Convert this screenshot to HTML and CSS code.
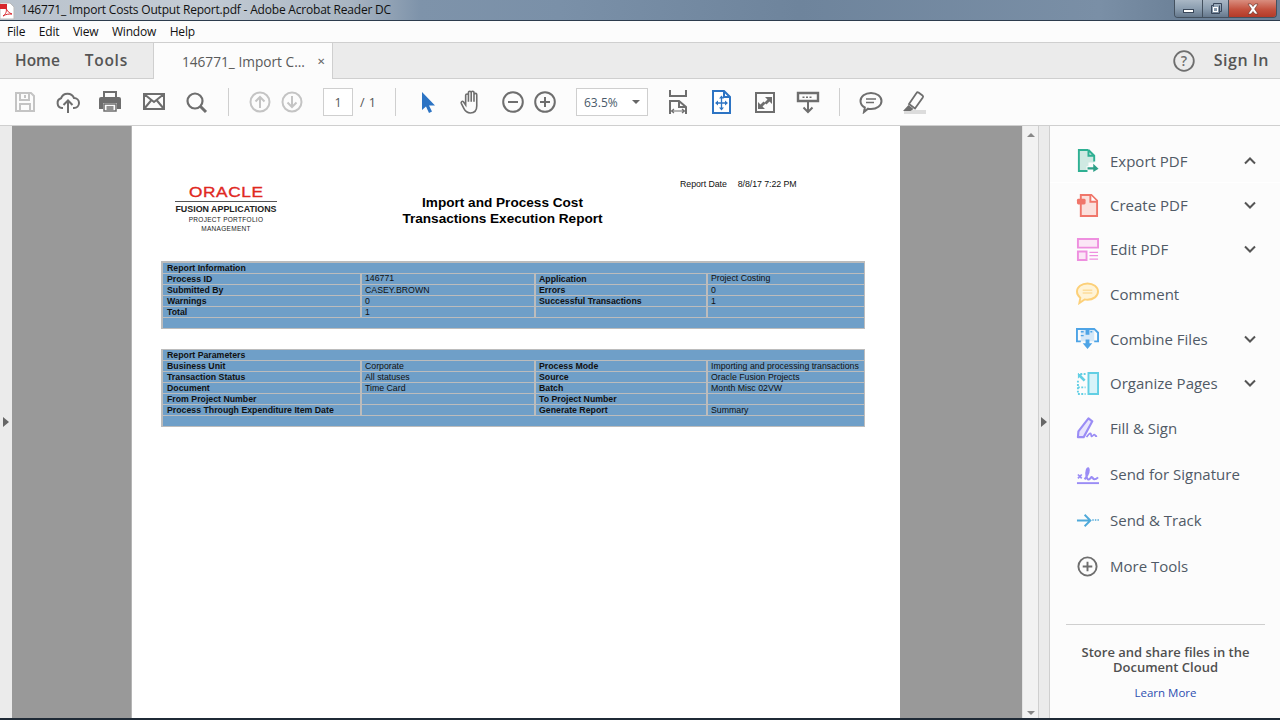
FILE: index.html
```html
<!DOCTYPE html>
<html lang="en">
<head>
<meta charset="utf-8">
<title>146771_ Import Costs Output Report.pdf - Adobe Acrobat Reader DC</title>
<link rel="stylesheet" href="styles.css">
</head>
<body>
<div class="app">
  <header class="titlebar">
    <svg class="appicon" width="16" height="20" viewBox="0 0 16 20"><path d="M0 2h10l4 4v12H0z" fill="#fff" stroke="#bbb"/><path d="M0 3h7v5H0z" fill="#d8262c"/><path d="M3 15c3-2 4-5 3-8 1 3 3 5 6 6-3 0-6 0-9 2z" fill="none" stroke="#d8262c"/></svg>
    <span class="titletext">146771_ Import Costs Output Report.pdf - Adobe Acrobat Reader DC</span>
    <div class="winbtns">
      <div class="winbtn min"><span class="minbar"></span></div>
      <div class="winbtn restore"><svg width="12" height="12" viewBox="0 0 12 12"><path d="M3.5 .5h8v8h-2v2h-8v-8h2z M3.5 2.5v1 M9.5 2.5v6" fill="none" stroke="#39475a"/><rect x="3.5" y="4.5" width="4" height="4" fill="none" stroke="#fff"/></svg></div>
      <div class="winbtn close"><svg width="18" height="12" viewBox="0 0 18 12"><path d="M4 1h3l2 2.5L11 1h3l-3.4 5L14 11h-3L9 8.5 7 11H4l3.4-5z" fill="#fff" stroke="#5c2a22" stroke-width=".6"/></svg></div>
    </div>
  </header>
  <nav class="menubar">
    <span>File</span><span>Edit</span><span>View</span><span>Window</span><span>Help</span>
  </nav>
  <div class="tabbar">
    <span class="navtab home">Home</span>
    <span class="navtab toolstab">Tools</span>
    <div class="doctab"><span class="doctitle">146771_ Import C...</span><span class="tabx">&#10005;</span></div>
    <svg class="help" width="24" height="24" viewBox="0 0 24 24"><circle cx="12" cy="12" r="9.8" fill="none" stroke="#6e6e6e" stroke-width="1.8"/><text x="12" y="17" text-anchor="middle" class="helpq">?</text></svg>
    <span class="signin">Sign In</span>
  </div>
  <div class="toolbar">
    <div class="grp wide">
      <svg class="ic" viewBox="0 0 24 24"><path d="M3 3h15l3 3v15H3z M7 3v7h9V3 M12 5v3 M7 21v-7h10v7" fill="none" stroke="#c4c4c4" stroke-width="2"/></svg>
      <svg class="ic" viewBox="0 0 24 24"><path d="M7 18H6a5 5 0 0 1-1-9.700A7 7 0 0 1 18 8a5 5 0 0 1 0 10h-1" fill="none" stroke="#6e6e6e" stroke-width="2"/><path d="M12 23V11 M7.500 15l4.500-4.500 4.500 4.500" fill="none" stroke="#6e6e6e" stroke-width="2"/></svg>
      <svg class="ic" viewBox="1 0 24 24"><path d="M6 8V2h12v6" fill="none" stroke="#6e6e6e" stroke-width="2"/><path d="M3 7h18a2 2 0 0 1 2 2v10h-4v-6H5v6H1V9a2 2 0 0 1 2-2z" fill="#6e6e6e"/><path d="M6 14h12v7H6z M8.500 17h7 M8.500 19h7" fill="none" stroke="#6e6e6e" stroke-width="1.500"/></svg>
      <svg class="ic" viewBox="0 0 24 24"><path d="M2 4h20v15H2z M2 4l10 8 10-8 M2 19l7.500-9 M22 19l-7.500-9" fill="none" stroke="#6e6e6e" stroke-width="2"/></svg>
      <svg class="ic" viewBox="1 0 24 24"><circle cx="11" cy="11" r="7.500" fill="none" stroke="#6e6e6e" stroke-width="2.200"/><path d="M16 16l6 6" stroke="#6e6e6e" stroke-width="3"/></svg>
    </div>
    <span class="sep"></span>
    <div class="grp narrow">
      <svg class="ic" viewBox="0 0 24 24"><circle cx="12" cy="12" r="9.500" fill="none" stroke="#c4c4c4" stroke-width="2"/><path d="M12 18V7 M7.500 11.500L12 7l4.500 4.500" fill="none" stroke="#c4c4c4" stroke-width="2"/></svg>
      <svg class="ic" viewBox="0 0 24 24"><circle cx="12" cy="12" r="9.500" fill="none" stroke="#c4c4c4" stroke-width="2"/><path d="M12 6v11 M7.500 12.500L12 17l4.500-4.500" fill="none" stroke="#c4c4c4" stroke-width="2"/></svg>
    </div>
    <div class="pager"><span class="pagebox">1</span><span class="pagetotal">/ 1</span></div>
    <span class="sep"></span>
    <div class="grp mixed">
      <svg class="ic" viewBox="0 0 24 24"><path d="M6 2l13 13.500h-6l3 6-3 1.500-3-6.500-4 3.500z" fill="#2d74c4"/></svg>
      <svg class="ic" viewBox="1.500 1 21 22.500"><path d="M7 15V6a1.300 1.300 0 0 1 2.600 0v6V3.500a1.300 1.300 0 0 1 2.600 0V12V3.500a1.300 1.300 0 0 1 2.600 0V12V5.500a1.300 1.300 0 0 1 2.600 0V16c0 4-2 6.500-6 6.500-3.500 0-5-2-6-4l-2.500-5c-.6-1.500 1-2.500 2-1.500z" fill="none" stroke="#6e6e6e" stroke-width="1.500"/></svg>
      <svg class="ic gapl" viewBox="0 0 24 24"><circle cx="12" cy="12" r="9.800" fill="none" stroke="#6e6e6e" stroke-width="2"/><path d="M7 12h10" stroke="#6e6e6e" stroke-width="2"/></svg>
      <svg class="ic" viewBox="0 0 24 24"><circle cx="12" cy="12" r="9.800" fill="none" stroke="#6e6e6e" stroke-width="2"/><path d="M7 12h10 M12 7v10" stroke="#6e6e6e" stroke-width="2"/></svg>
    </div>
    <div class="zoombox"><span>63.5%</span><i class="caret"></i></div>
    <div class="grp wide">
      <svg class="ic" viewBox="1 0 24 24"><path d="M4 0v6h16V0" fill="none" stroke="#6e6e6e" stroke-width="2"/><path d="M4 24V11h9l7 6v7 M13 11v6h7" fill="none" stroke="#6e6e6e" stroke-width="2"/><path d="M6 21h12 M8 19l-2.500 2 2.500 2 M16 19l2.500 2-2.500 2" fill="none" stroke="#6e6e6e" stroke-width="1.200"/></svg>
      <svg class="ic" viewBox="1 0 24 24"><path d="M4 1h11l6 6v16H4z" fill="#fff" stroke="#2d74c4" stroke-width="2"/><path d="M15 1v6h6" fill="none" stroke="#2d74c4" stroke-width="2"/><path d="M12.500 7v12 M7 13h11" stroke="#2d74c4" stroke-width="1.300"/><path d="M12.500 5.500l-2.500 3h5z M12.500 20.500l-2.500-3h5z M6 13l3-2.500v5z M19 13l-3-2.500v5z" fill="#2d74c4"/></svg>
      <svg class="ic" viewBox="0 0 24 24"><path d="M3 3h18v19H3z" fill="none" stroke="#6e6e6e" stroke-width="2"/><path d="M12 7h7v7l-2.500-2.500-3 3-2-2 3-3z M12 19H5v-7l2.500 2.500 3-3 2 2-3 3z" fill="#6e6e6e"/></svg>
      <svg class="ic" viewBox="0 0 24 24"><path d="M2 3h20v8H2z" fill="none" stroke="#6e6e6e" stroke-width="2.400"/><path d="M6.500 6.500h2v1.500h-2z M10 6.500h2v1.500h-2z M13.500 6.500h2v1.500h-2z" fill="#6e6e6e"/><path d="M12 12v10 M7.500 17.500L12 22l4.500-4.500" fill="none" stroke="#6e6e6e" stroke-width="2"/></svg>
    </div>
    <span class="sep"></span>
    <div class="grp wide">
      <svg class="ic" viewBox="0 0 24 24"><path d="M12 3c6 0 10.500 3.500 10.500 8s-4.500 8-10.500 8c-1 0-2 0-3-.3L5 22l.8-4.500C3 16 1.500 13.500 1.500 11 1.500 6.500 6 3 12 3z" fill="none" stroke="#6e6e6e" stroke-width="2"/><path d="M7 9h10 M7 12.500h8" stroke="#6e6e6e" stroke-width="1.300"/></svg>
      <svg class="ic" viewBox="0 0 24 24"><path d="M2 20h22v4H2z" fill="#dcdcdc"/><path d="M16.500 2.500l4 3a1.500 1.500 0 0 1 .3 2L13 18.500l-6-4.500 7.500-11a1.500 1.500 0 0 1 2-.5z" fill="none" stroke="#6e6e6e" stroke-width="1.800"/><path d="M6.500 15l5 4-3 2H1z" fill="#6e6e6e"/></svg>
    </div>
  </div>
  <main class="workspace">
    <div class="gutter"><i class="arrow"></i></div>
    <section class="canvas">
      <article class="page">
        <div class="reporthead">
          <div class="logo">
            <div class="oracle"><span>ORACLE</span></div>
            <div class="fusion">FUSION APPLICATIONS</div>
            <div class="ppm">PROJECT PORTFOLIO<br>MANAGEMENT</div>
          </div>
          <h1 class="reporttitle">Import and Process Cost<br>Transactions Execution Report</h1>
          <div class="reportdate"><span>Report Date</span><span>8/8/17 7:22 PM</span></div>
        </div>
        <div class="rtable first">
          <div class="hd">Report Information</div>
          <b>Process ID</b><span class="up">146771</span><b>Application</b><span class="up">Project Costing</span>
          <b>Submitted By</b><span>CASEY.BROWN</span><b>Errors</b><span>0</span>
          <b>Warnings</b><span>0</span><b>Successful Transactions</b><span>1</span>
          <b>Total</b><span>1</span><b></b><span></span>
          <div class="hd"></div>
        </div>
        <div class="rtable second">
          <div class="hd">Report Parameters</div>
          <b>Business Unit</b><span>Corporate</span><b>Process Mode</b><span>Importing and processing transactions</span>
          <b>Transaction Status</b><span>All statuses</span><b>Source</b><span>Oracle Fusion Projects</span>
          <b>Document</b><span>Time Card</span><b>Batch</b><span>Month Misc 02VW</span>
          <b>From Project Number</b><span></span><b>To Project Number</b><span></span>
          <b>Process Through Expenditure Item Date</b><span></span><b>Generate Report</b><span>Summary</span>
          <div class="hd"></div>
        </div>
      </article>
    </section>
    <div class="scrollbar"><i class="sup"></i><i class="sdown"></i></div>
    <div class="handle"><i class="arrow"></i></div>
    <aside class="panel">
      <div class="toollist">
        <div class="row r44 open"><svg class="tic" viewBox="0 0 24 24"><path d="M3 1h11l5 5v8h-6v4h-2v5H3z" fill="#cfe9e2"/><path d="M13 1H3v22h9 M13 1l6 6v6 M13 1v6h6" fill="none" stroke="#2fb093" stroke-width="2"/><path d="M12 19h6v-3.500l5.500 5-5.500 3.500v-2.500h-6z" fill="#2fa088"/></svg><span>Export PDF</span><svg class="chev" viewBox="0 0 12 8"><path d="M1 6.500l5-5 5 5" fill="none" stroke="#555" stroke-width="2"/></svg></div>
        <div class="row r44"><svg class="tic" viewBox="0 0 24 24"><path d="M5 1h11l6 6v16H5z" fill="#fbe0dc" stroke="#f0766a" stroke-width="2"/><path d="M15 1v7h7" fill="#fff" stroke="#f0766a" stroke-width="2"/><rect x="1" y="5" width="9" height="6" rx="1.500" fill="#f0766a"/></svg><span>Create PDF</span><svg class="chev" viewBox="0 0 12 8"><path d="M1 1.500l5 5 5-5" fill="none" stroke="#555" stroke-width="2"/></svg></div>
        <div class="row r44"><svg class="tic" viewBox="0 0 24 24"><path d="M2 1h21v9H2z M2 14h9v9H2z" fill="#fbe6f6" stroke="#ee8fdf" stroke-width="2"/><path d="M14 15h9 M14 18.500h9 M14 22h9" stroke="#ee8fdf" stroke-width="1.300"/></svg><span>Edit PDF</span><svg class="chev" viewBox="0 0 12 8"><path d="M1 1.500l5 5 5-5" fill="none" stroke="#555" stroke-width="2"/></svg></div>
        <div class="row r45"><svg class="tic" viewBox="0 0 24 24"><path d="M12 1.500c6 0 11 3.700 11 8.500s-5 8.500-11 8.500c-1 0-2 0-3-.3L3.500 22l1-5.500C2.500 15 1 13 1 10c0-4.800 5-8.500 11-8.500z" fill="#fff3d6" stroke="#fcd079" stroke-width="2"/><path d="M7 8.500h10 M7 11.500h10" stroke="#fcd079" stroke-width="1"/></svg><span>Comment</span></div>
        <div class="row r45"><svg class="tic" viewBox="0 0 24 24"><path d="M5 3h14v12H5z" fill="#d5e8f8"/><path d="M5 15H1V2h10v6 M13 8V2h6l4 4v9h-4" fill="none" stroke="#4ea4e6" stroke-width="2"/><path d="M5 5h3M5 9h3M15 5h2" stroke="#4ea4e6" stroke-width="1.500"/><path d="M10 13h4v5h-4z M7 17h10l-5 6z" fill="#4ea4e6"/></svg><span>Combine Files</span><svg class="chev" viewBox="0 0 12 8"><path d="M1 1.500l5 5 5-5" fill="none" stroke="#555" stroke-width="2"/></svg></div>
        <div class="row r44"><svg class="tic" viewBox="0 0 24 24"><path d="M13 1h10v22H13z" fill="#d8f3f9" stroke="#62cfe4" stroke-width="2"/><path d="M10 2H2 M2 9v14h8 M2 16h8" fill="none" stroke="#62cfe4" stroke-width="2" stroke-dasharray="2 1.500"/><path d="M2 2h5l-1.500 1.500L10 8l-2 2-4.500-4.500L2 7z" fill="#62cfe4"/></svg><span>Organize Pages</span><svg class="chev" viewBox="0 0 12 8"><path d="M1 1.500l5 5 5-5" fill="none" stroke="#555" stroke-width="2"/></svg></div>
        <div class="row r46"><svg class="tic" viewBox="0 0 24 24"><path d="M13 1.500l4 3L8 21H2l.5-6z" fill="#e8e4fd" stroke="#9a8cf5" stroke-width="2.200" stroke-linejoin="round"/><path d="M11 21c2-3 4-5 4.500-3.500s.2 3.500 1.500 2.500 1.500-2 2.500-1.500.5 2 2.500 1.500" fill="none" stroke="#9a8cf5" stroke-width="1.800"/></svg><span>Fill &amp; Sign</span></div>
        <div class="row r46"><svg class="tic" viewBox="0 0 24 24"><path d="M1 21h23" stroke="#9a8cf5" stroke-width="2"/><path d="M2 12l4 4M6 12l-4 4" stroke="#9a8cf5" stroke-width="1.800"/><path d="M9 17c3-4 5-9 4-11s-3 3-2 8 3 3 4 2 1-2 2-1 1 2 2 2 3-1 4-2" fill="none" stroke="#9a8cf5" stroke-width="2.200"/></svg><span>Send for Signature</span></div>
        <div class="row r46"><svg class="tic" viewBox="0 0 24 24"><path d="M1 12h13 M9 6l6 6-6 6" fill="none" stroke="#4fa9d9" stroke-width="2"/><path d="M17 11.500h7" stroke="#4fa9d9" stroke-width="1.500" stroke-dasharray="1.500 1.200"/></svg><span>Send &amp; Track</span></div>
        <div class="row r46"><svg class="tic" viewBox="0 0 24 24"><circle cx="12" cy="12" r="9.500" fill="none" stroke="#6e6e6e" stroke-width="2"/><path d="M7 12h10 M12 7v10" stroke="#6e6e6e" stroke-width="2"/></svg><span>More Tools</span></div>
      </div>
      <div class="cloud">
        <p class="cloudtext">Store and share files in the<br>Document Cloud</p>
        <span class="learn">Learn More</span>
      </div>
    </aside>
  </main>
</div>
</body>
</html>
```
FILE: styles.css
```css
* { box-sizing: border-box; }
html, body { margin: 0; height: 100%; overflow: hidden; }
body { font-family: "Open Sans", "Noto Sans", sans-serif; color: #505050; background: #fff; }
.app { width: 1280px; height: 720px; display: flex; flex-direction: column; overflow: hidden; }

.titlebar { height: 21px; flex: none; display: flex; align-items: flex-start; border-bottom: 1px solid #2d3c4d;
  background: linear-gradient(90deg, #b9c2cc 0, #c4ccd5 200px, #a9b5c2 350px, #7e93aa 420px, #7a90a8 560px, #6e849c 800px, #7a8fa6 1100px, #6c8198 1180px); }
.appicon { flex: none; margin-top: 1px; }
.titletext { font-size: 12px; line-height: 20px; color: #111; margin-left: 5px; white-space: nowrap; letter-spacing: -.2px; }
.winbtns { margin-left: auto; margin-right: 3px; display: flex; height: 18px; border: 1px solid #44515f; border-top: 0; border-radius: 0 0 4px 4px; overflow: hidden; }
.winbtn { display: flex; align-items: center; justify-content: center; height: 100%; border-right: 1px solid #44515f; background: linear-gradient(#a9b7c5, #8c9eb0 50%, #66798d); }
.min { width: 28px; }
.restore { width: 26px; }
.close { width: 47px; border-right: 0; background: linear-gradient(#d98e7f, #c4523f 55%, #b33a28); }
.minbar { width: 11px; height: 4px; background: #fff; border: 1px solid #39475a; margin-top: 5px; }

.menubar { height: 21px; flex: none; display: flex; align-items: center; background: #fcfcfc; padding-left: 7px; gap: 13.5px; font-size: 12px; color: #111; letter-spacing: -.18px; }

.tabbar { height: 37px; flex: none; display: flex; align-items: stretch; background: #ebebeb; border-top: 1px solid #cfcfcf; border-bottom: 1px solid #cfcfcf; }
.navtab { font-size: 15.5px; font-weight: 600; line-height: 34px; color: #555; }
.home { margin-left: 15px; }
.toolstab { margin-left: 25px; letter-spacing: .7px; }
.doctab { margin-left: 25px; width: 180px; height: 36px; display: flex; align-items: center; background: #fcfcfc; border-left: 1px solid #cfcfcf; border-right: 1px solid #cfcfcf; padding-left: 28px; }
.doctitle { font-size: 13.7px; color: #5a5a5a; white-space: nowrap; }
.tabx { margin-left: 12px; font-size: 10px; font-weight: 700; color: #666; font-family: "DejaVu Sans", sans-serif; }
.help { margin-left: auto; align-self: center; }
.helpq { font-family: "Open Sans", sans-serif; font-size: 14px; font-weight: 600; fill: #6e6e6e; }
.signin { margin-left: 18px; margin-right: 11px; font-size: 16px; font-weight: 600; line-height: 34px; color: #555; letter-spacing: .55px; }

.toolbar { height: 47px; flex: none; display: flex; align-items: center; gap: 19px; padding-left: 13px; background: #fcfcfc; border-bottom: 1px solid #cfcfcf; }
.grp { display: flex; align-items: center; }
.grp.wide { gap: 19px; }
.grp.narrow { gap: 8px; }
.grp.mixed { gap: 8px; margin-left: 1px; }
.ic { width: 24px; height: 24px; display: block; flex: none; }
.ic.gapl { margin-left: 10px; }
.grp.mixed .ic:nth-child(2) { margin-left: 11px; }
.sep { width: 1px; height: 28px; background: #cfcfcf; flex: none; }
.pager { display: flex; align-items: center; gap: 7px; font-size: 12.5px; color: #555; }
.pagebox { width: 30px; height: 28px; display: flex; align-items: center; justify-content: center; background: #fff; border: 1px solid #cfcfcf; }
.pagetotal { width: 16px; white-space: nowrap; letter-spacing: .4px; }
.zoombox { width: 72px; height: 28px; display: flex; align-items: center; background: #fff; border: 1px solid #cfcfcf; padding-left: 7px; font-size: 12px; color: #4a5a6a; }
.caret { margin-left: auto; margin-right: 7px; width: 0; height: 0; border: 4px solid transparent; border-top: 4px solid #666; border-bottom: 0; }

.workspace { flex: 1; min-height: 0; display: flex; border-bottom: 2px solid #1f2a36; }
.gutter { width: 12px; flex: none; background: #ebebeb; display: flex; align-items: center; justify-content: center; }
.arrow { width: 0; height: 0; border: 5.500px solid transparent; border-left: 6px solid #666; border-right: 0; display: block; }
.canvas { width: 1010px; flex: none; background: #999; padding-left: 119px; overflow: hidden; }
.page { width: 769px; height: 100%; background: #fff; padding-left: 29px; padding-right: 35px; border-left: 1px solid #b5b5b5; }
.reporthead { height: 135px; display: flex; align-items: flex-start; }
.logo { margin-left: 14px; margin-top: 57px; width: 102px; flex: none; text-align: center; color: #222; }
.oracle { height: 19px; padding-top: 3px; border-bottom: 1px solid #555; display: flex; justify-content: center; align-items: flex-start; }
.oracle span { display: block; font-family: "Liberation Sans", sans-serif; font-size: 14px; line-height: 12px; color: #e0281f; letter-spacing: .5px; -webkit-text-stroke: .35px #e0281f; transform: scaleX(1.23); }
.fusion { font-family: "Liberation Sans", sans-serif; font-size: 8.9px; font-weight: 700; line-height: 11px; margin-top: 2px; white-space: nowrap; }
.ppm { font-family: "Liberation Sans", sans-serif; font-size: 6.5px; line-height: 8.5px; margin-top: 1px; letter-spacing: .3px; }
.reporttitle { font-family: "Liberation Sans", sans-serif; font-size: 13.6px; line-height: 16px; font-weight: 700; color: #000; margin: 69px 0 0 104.5px; width: 242px; flex: none; text-align: center; white-space: nowrap; }
.reportdate { font-family: "Liberation Sans", sans-serif; font-size: 8.8px; color: #111; margin-left: 56.5px; margin-top: 53px; display: flex; gap: 11px; white-space: nowrap; letter-spacing: -.06px; }

.rtable { width: 704px; display: grid; grid-template-columns: 197px 172px 170px 1fr; grid-auto-rows: 10px; gap: 1px 2px; background: #bcbcbc; padding: 1px 1px 1px 2px; font-family: "Liberation Sans", sans-serif; font-size: 8.75px; line-height: 10px; color: #111; }
.rtable.first { padding-top: 2px; }
.rtable.second { margin-top: 20px; }
.rtable > * { background: #6f9fc8; padding-left: 3px; white-space: nowrap; overflow: hidden; font-weight: 400; }
.rtable > :nth-child(4n+2) { padding-left: 4px; }
.rtable > b { font-weight: 700; }
.rtable > .hd { grid-column: 1 / -1; font-weight: 700; padding-left: 4px; }
.rtable .up { line-height: 8px; }

.scrollbar { width: 17px; flex: none; background: #f2f2f2; border-right: 1px solid #cfcfcf; border-left: 1px solid #e4e4e4; display: flex; flex-direction: column; justify-content: space-between; align-items: center; padding: 7px 0 3px; }
.sup { width: 0; height: 0; border: 4px solid transparent; border-bottom: 4px solid #888; border-top: 0; }
.sdown { width: 0; height: 0; border: 4px solid transparent; border-top: 4px solid #888; border-bottom: 0; }
.handle { width: 11px; flex: none; background: #ebebeb; border-right: 1px solid #cfcfcf; display: flex; align-items: center; justify-content: center; }
.panel { flex: 1; min-width: 0; background: #fcfcfc; display: flex; flex-direction: column; padding-top: 13px; }
.row { display: flex; align-items: center; position: relative; padding-left: 26px; font-size: 15px; color: #505a66; white-space: nowrap; }
.r44 { height: 44px; }
.r45 { height: 45px; }
.r46 { height: 46px; }
.row.open { border-bottom: 1px solid #fff; }
.tic { width: 23px; height: 23px; flex: none; margin-right: 11px; }
.chev { width: 12px; height: 8px; position: absolute; left: 194px; top: 50%; margin-top: -4px; }
.cloud { margin: 35px 15px 0 16px; border-top: 1px solid #cfcfcf; text-align: center; padding-top: 20px; }
.cloudtext { margin: 0; font-size: 13px; line-height: 15px; font-weight: 600; color: #505050; white-space: nowrap; }
.learn { display: block; margin-top: 10px; font-size: 11.5px; line-height: 16px; color: #2d4fb0; }
```
